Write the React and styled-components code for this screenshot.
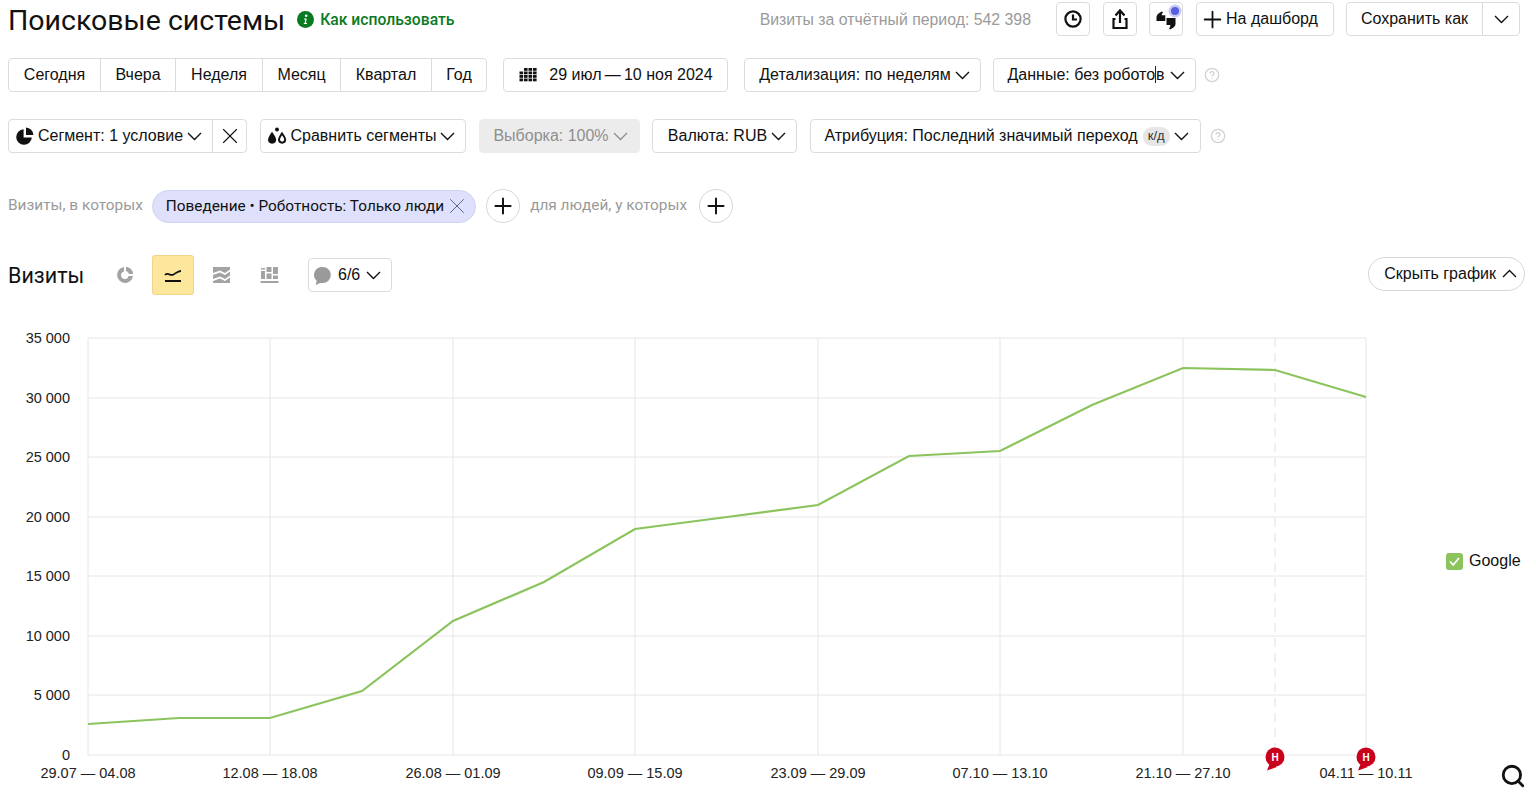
import React from "react";
import styled, { createGlobalStyle } from "styled-components";
import { X, Plus, Search, CircleHelp } from "lucide-react";

const GlobalStyle = createGlobalStyle`
  html, body {
    margin: 0;
    padding: 0;
    background: #fff;
    color: #111;
    font-family: "Liberation Sans", Arial, sans-serif;
    overflow: hidden;
  }
  * { box-sizing: border-box; }
`;

const Page = styled.div`
  width: 1536px;
  height: 798px;
  padding: 2px 16px 0 8px;
  overflow: hidden;
`;

const TopRow = styled.div`
  height: 34px;
  display: flex;
  align-items: center;
  justify-content: space-between;
`;

const TitleGroup = styled.div`
  display: flex;
  align-items: center;
  gap: 12px;
`;

const Title = styled.h1`
  margin: 4px 0 0;
  font-family: Roboto, "Liberation Sans", sans-serif;
  font-size: 28.5px;
  font-weight: 400;
  line-height: 34px;
  white-space: nowrap;
`;

const HowTo = styled.a`
  display: flex;
  align-items: center;
  gap: 6px;
  color: #0a7a21;
  font-family: Roboto, sans-serif;
  font-size: 15.7px;
  font-weight: 500;
`;

const TopActions = styled.div`
  display: flex;
  align-items: center;
`;

const Period = styled.span`
  margin: 1px 25px 0 0;
  color: #9a9a9a;
  font-size: 15.85px;
  white-space: nowrap;
`;

const Button = styled.button`
  height: ${(p) => p.$h || 34}px;
  width: ${(p) => (p.$w ? `${p.$w}px` : "auto")};
  margin-left: ${(p) => p.$ml || 0}px;
  padding: ${(p) => (p.$pad !== undefined ? p.$pad : "0 15px")};
  display: flex;
  align-items: center;
  justify-content: ${(p) => p.$justify || "center"};
  gap: ${(p) => p.$gap || 0}px;
  flex: none;
  position: relative;
  background: ${(p) => (p.$disabled ? "#ececec" : "#fff")};
  color: ${(p) => (p.$disabled ? "#8f8f8f" : "#111")};
  border: 1px solid ${(p) => (p.$disabled ? "#ececec" : "#dcdcdc")};
  border-radius: 4px;
  font-family: "Liberation Sans", Arial, sans-serif;
  font-size: 16px;
  white-space: nowrap;
`;

const Joined = styled.div`
  display: flex;
  flex: none;
  margin-left: ${(p) => p.$ml || 0}px;

  & > button { border-radius: 0; margin-left: -1px; }
  & > button:first-child { border-radius: 4px 0 0 4px; margin-left: 0; }
  & > button:last-child { border-radius: 0 4px 4px 0; }
`;

const Dot = styled.span`
  position: absolute;
  top: 4px;
  right: 3px;
  width: 8px;
  height: 8px;
  border-radius: 50%;
  background: #5a5fe0;
  box-shadow: 0 0 0 2.5px #c9caf7;
`;

const ControlRow = styled.div`
  display: flex;
  align-items: center;
  height: 34px;
  margin-top: ${(p) => p.$mt}px;
`;

const Help = styled(CircleHelp)`
  flex: none;
  width: 16px;
  height: 16px;
  margin-left: ${(p) => p.$ml || 8}px;
  color: #d2d2d2;
`;

const Caret = styled.span`
  display: inline-block;
  width: 0;
  height: 17px;
  margin-bottom: -3px;
  border-left: 1px solid #222;
`;

const Hotkey = styled.span`
  margin: 0 4px 0 5px;
  padding: 1px 5px 3px;
  background: #e6e6e6;
  border-radius: 9px;
  font-size: 13px;
  color: #333;
`;

const FilterRow = styled.div`
  display: flex;
  align-items: center;
  height: 34px;
  margin-top: 36px;
`;

const FilterLabel = styled.span`
  color: #9a9a9a;
  font-family: Roboto, sans-serif;
  font-size: 15.4px;
  margin-bottom: 3px;
  white-space: nowrap;
`;

const Chip = styled.div`
  height: 33px;
  margin-left: 9px;
  padding: 0 5px 0 13px;
  display: flex;
  align-items: center;
  background: #dfe0fb;
  border: 1px solid #cfd1f3;
  border-radius: 17px;
  font-family: Roboto, sans-serif;
  font-size: 15.35px;
  white-space: nowrap;
`;

const RoundAdd = styled.button`
  width: 34px;
  height: 34px;
  flex: none;
  margin: 0 10px 0 ${(p) => p.$ml || 10}px;
  padding: 0;
  display: flex;
  align-items: center;
  justify-content: center;
  background: #fff;
  color: #111;
  border: 1px solid #d6d6d6;
  border-radius: 50%;
`;

const ChartHeader = styled.div`
  display: flex;
  align-items: center;
  height: 40px;
  margin-top: 32px;
`;

const ChartTitle = styled.h2`
  margin: 1px 0 0;
  width: 96px;
  font-family: Roboto, sans-serif;
  font-size: 21.5px;
  font-weight: 400;
`;

const ChartType = styled.button`
  width: 42px;
  height: 40px;
  margin: 0 ${(p) => p.$mr || 6}px 0 0;
  padding: 0;
  display: flex;
  align-items: center;
  justify-content: center;
  background: ${(p) => (p.$active ? "#fde79c" : "transparent")};
  border: 1px solid ${(p) => (p.$active ? "#ecd68b" : "transparent")};
  border-radius: 3px;
`;

const HideChart = styled.button`
  height: 34px;
  margin: 0 -5px 3px auto;
  padding: 0 7px 0 15px;
  display: flex;
  align-items: center;
  gap: 6px;
  background: #fff;
  color: #111;
  border: 1px solid #d6d6d6;
  border-radius: 17px;
  font-family: "Liberation Sans", Arial, sans-serif;
  font-size: 16px;
  white-space: nowrap;
`;

const ChartArea = styled.div`
  display: flex;
  height: 483px;
  margin: 25px -16px 0 -8px;
`;

const Plot = styled.svg`
  width: 1430px;
  height: 483px;
  flex: none;
  font-family: "Liberation Sans", Arial, sans-serif;
`;

const Side = styled.div`
  flex: 1;
  display: flex;
  flex-direction: column;
  align-items: flex-start;
  padding: 232px 0 0 16px;
`;

const Legend = styled.label`
  display: flex;
  align-items: center;
  gap: 6px;
  font-size: 16px;
`;

const LegendBox = styled.span`
  width: 17px;
  height: 17px;
  display: flex;
  align-items: center;
  justify-content: center;
  background: #8bc45d;
  border-radius: 3px;
`;

const Zoom = styled(Search)`
  width: 26px;
  height: 26px;
  margin: 193px 0 0 54px;
  color: #111;
`;

const Chev = ({ color = "#111", up }) => (
  <svg width="15" height="9" viewBox="0 0 15 9" fill="none" stroke={color} strokeWidth="1.4">
    <path d={up ? "M1 8L7.5 1.5L14 8" : "M1 1L7.5 7.5L14 1"} />
  </svg>
);

const ClockIcon = () => (
  <svg width="20" height="20" viewBox="0 0 20 20" fill="none" stroke="#111" strokeWidth="2.2">
    <circle cx="10" cy="10" r="7.6" />
    <path d="M10 5.5V10.5H14" />
  </svg>
);

const ShareIcon = () => (
  <svg width="20" height="22" viewBox="0 0 20 22" fill="none" stroke="#111" strokeWidth="2.2">
    <path d="M10 15V3.5" />
    <path d="M5.5 7.5L10 2.5L14.5 7.5" />
    <path d="M5.5 11H3.5V20H16.5V11H14.5" />
  </svg>
);

const QuotesIcon = () => (
  <svg width="20" height="21" viewBox="0 0 20 21" fill="#111">
    <path d="M0.5 8C0.5 6 2.5 4 6 2.5L7 3.5C6 4.5 5.7 5.5 5.7 6.2H9.3V12H0.5Z" />
    <path d="M10.5 9H19.5V15C19.5 17 17.5 19 14 20.5L13 19.5C14 18.5 14.3 17.5 14.3 16H10.5Z" />
  </svg>
);

const GridIcon = () => (
  <svg width="20" height="16" viewBox="0 0 20 16" fill="#111">
    {[0, 1, 2, 3].map((r) =>
      [0, 1, 2, 3].map((c) =>
        r === 0 && c === 0 ? null : <rect key={`${r}-${c}`} x={1.5 + c * 4.5} y={1 + r * 3.5} width="3.6" height="2.8" />
      )
    )}
  </svg>
);

const PieIcon = ({ color = "#111", size = 18 }) => (
  <svg width={size} height={size} viewBox="0 0 18 18" fill={color}>
    <path d="M7.6 2.2A7.8 7.8 0 1 0 15.8 10.4H7.6Z" />
    <path d="M10 0.6A7.8 7.8 0 0 1 17.4 8H10Z" />
  </svg>
);

const DropsIcon = () => (
  <svg width="20" height="18" viewBox="0 0 20 18" fill="none" stroke="#111" strokeWidth="2">
    <path d="M5 6.5C3.4 9 2 10.5 2 12.6A3.1 3.1 0 0 0 8.2 12.6C8.2 10.5 6.6 9 5 6.5Z" fill="#111" />
    <path d="M15 6.5C13.4 9 12 10.5 12 12.6A3.1 3.1 0 0 0 18.2 12.6C18.2 10.5 16.6 9 15 6.5Z" />
    <circle cx="10" cy="2.4" r="2" fill="#111" stroke="none" />
  </svg>
);

const InfoIcon = () => (
  <svg width="17" height="17" viewBox="0 0 17 17">
    <circle cx="8.5" cy="8.5" r="8.5" fill="#0a7a21" />
    <circle cx="9.2" cy="4.7" r="1.3" fill="#fff" />
    <path d="M7 7.4H9.7L8.9 12H10V13H6.8V12H7.7L8.2 8.4H7Z" fill="#fff" />
  </svg>
);

const DonutType = () => (
  <svg width="18" height="18" viewBox="0 0 18 18" fill="#a3a3a3">
    <path d="M8 1A8 8 0 1 0 17 10H12.6A3.8 3.8 0 1 1 8 5.4Z" />
    <path d="M10 0.8A8 8 0 0 1 17.2 8H13A4 4 0 0 0 10 5Z" />
  </svg>
);

const LineType = () => (
  <svg width="20" height="16" viewBox="0 0 20 16" fill="none" stroke="#111" strokeWidth="1.8">
    <path d="M2 8C5 4.5 7 9.5 10.5 7.5C13 6 15 4 18 4" />
    <path d="M2 14H18" strokeWidth="2" />
  </svg>
);

const AreaType = () => (
  <svg width="19" height="18" viewBox="0 0 19 18" fill="#a3a3a3">
    <path d="M1 1H18V3.5L13 7L8 4.5L1 7Z" />
    <path d="M1 9L8 6.5L13 9L18 5.5V9.5L13 13L8 10.5L1 13Z" />
    <path d="M1 15L8 12.5L13 15L18 11.5V17H1Z" />
  </svg>
);

const BarsType = () => (
  <svg width="19" height="18" viewBox="0 0 19 18" fill="#a3a3a3">
    <path d="M1 2H5V3.5H1ZM1 5H5V13H1ZM6.5 1H11.5V6H6.5ZM6.5 7.5H11.5V13H6.5ZM13 1H18V8H13ZM13 9.5H18V13H13Z" />
    <rect x="0.5" y="15" width="18" height="2" />
  </svg>
);

const BubbleIcon = () => (
  <svg width="19" height="19" viewBox="0 0 19 19" fill="#9a9a9a">
    <path d="M9.8 1A8 8 0 0 1 9.8 17C8 17 6.4 16.6 4.2 18.4C3.2 18.9 2.5 18.6 3 17.6C3.5 16.6 3.6 15.6 3.4 14.6A8 8 0 0 1 9.8 1Z" />
  </svg>
);

const yTicks = [
  ["35 000", 18],
  ["30 000", 78],
  ["25 000", 137],
  ["20 000", 197],
  ["15 000", 256],
  ["10 000", 316],
  ["5 000", 375],
  ["0", 435],
];

const xTicks = [
  ["29.07 — 04.08", 88],
  ["12.08 — 18.08", 270],
  ["26.08 — 01.09", 453],
  ["09.09 — 15.09", 635],
  ["23.09 — 29.09", 818],
  ["07.10 — 13.10", 1000],
  ["21.10 — 27.10", 1183],
  ["04.11 — 10.11", 1366],
];

// y is counted from the top of the chart area (page y - 320)
const visits = [
  [88, 404], [179, 398], [270, 398], [362, 371], [453, 301],
  [544, 262], [635, 209], [727, 197], [818, 185], [909, 136],
  [1000, 131], [1092, 85], [1183, 48], [1275, 50], [1366, 77],
];

const Note = ({ x }) => (
  <g transform={`translate(${x} 437)`}>
    <path d="M-5 6L-8 13.5L2 10Z" fill="#c9001c" />
    <circle r="9.5" fill="#c9001c" />
    <text y="3.8" textAnchor="middle" fontSize="10" fontWeight="700" fill="#fff">Н</text>
  </g>
);

const VisitsChart = () => (
  <Plot viewBox="0 0 1430 483">
    {yTicks.map(([label, y]) => (
      <g key={label}>
        <line x1="88" x2="1366" y1={y} y2={y} stroke="#e6e6e6" />
        <text x="70" y={y + 5} textAnchor="end" fontSize="14.5" fill="#222">{label}</text>
      </g>
    ))}
    {xTicks.map(([label, x]) => (
      <g key={label}>
        <line x1={x} x2={x} y1="18" y2="435" stroke="#e6e6e6" />
        <text x={x} y="458" textAnchor="middle" fontSize="14.5" fill="#222">{label}</text>
      </g>
    ))}
    <line x1="1275" x2="1275" y1="18" y2="435" stroke="#e0e0e0" strokeDasharray="9 6" />
    <polyline points={visits.map((p) => p.join(",")).join(" ")} fill="none" stroke="#8bc45d" strokeWidth="2.2" />
    <Note x={1275} />
    <Note x={1366} />
  </Plot>
);

export default function App() {
  return (
    <>
      <GlobalStyle />
      <Page>
        <TopRow>
          <TitleGroup>
            <Title>Поисковые системы</Title>
            <HowTo>
              <InfoIcon />
              Как использовать
            </HowTo>
          </TitleGroup>
          <TopActions>
            <Period>Визиты за отчётный период: 542 398</Period>
            <Button $w={34} $pad="0"><ClockIcon /></Button>
            <Button $w={34} $pad="0" $ml={13}><ShareIcon /></Button>
            <Button $w={34} $pad="0" $ml={12}>
              <QuotesIcon />
              <Dot />
            </Button>
            <Button $w={138} $pad="0 0 0 2px" $ml={13} $justify="flex-start">
              <Plus size={27} strokeWidth={1.6} />
              На дашборд
            </Button>
            <Joined $ml={12}>
              <Button $w={137}>Сохранить как</Button>
              <Button $w={38} $pad="0"><Chev /></Button>
            </Joined>
          </TopActions>
        </TopRow>

        <ControlRow $mt={22}>
          <Joined>
            <Button $w={93}>Сегодня</Button>
            <Button $w={76}>Вчера</Button>
            <Button $w={88}>Неделя</Button>
            <Button $w={79}>Месяц</Button>
            <Button $w={92}>Квартал</Button>
            <Button $w={56}>Год</Button>
          </Joined>
          <Button $w={225} $ml={16} $gap={11} $pad="0">
            <GridIcon />
            29 июл{"\u2009"}—{"\u2009"}10 ноя 2024
          </Button>
          <Button $w={237} $ml={16} $gap={4} $pad="0 0 0 4px">Детализация: по неделям <Chev /></Button>
          <Button $w={203} $ml={12} $gap={5} $pad="0 0 0 3px">
            <span>Данные: без робото<Caret />в</span> <Chev />
          </Button>
          <Help />
        </ControlRow>

        <ControlRow $mt={27}>
          <Joined>
            <Button $w={205} $gap={4} $pad="0 3px 0 0">
              <PieIcon />
              Сегмент: 1 условие <Chev />
            </Button>
            <Button $w={35} $pad="0"><X size={26} strokeWidth={1} /></Button>
          </Joined>
          <Button $w={206} $ml={13} $gap={3} $pad="0 4px 0 0">
            <DropsIcon />
            Сравнить сегменты <Chev />
          </Button>
          <Button $w={161} $ml={13} $gap={4} $pad="0 0 0 2px" $disabled>
            Выборка: 100% <Chev color="#8f8f8f" />
          </Button>
          <Button $w={145} $ml={12} $gap={4} $pad="0 0 0 5px">Валюта: RUB <Chev /></Button>
          <Button $w={391} $ml={13} $pad="0 0 0 2px">
            Атрибуция: Последний значимый переход
            <Hotkey>к/д</Hotkey>
            <Chev />
          </Button>
          <Help $ml={9} />
        </ControlRow>

        <FilterRow>
          <FilterLabel>Визиты, в которых</FilterLabel>
          <Chip>
            Поведение • Роботность: Только люди
            <X size={26} strokeWidth={0.9} color="#5c5f8c" />
          </Chip>
          <RoundAdd><Plus size={26} strokeWidth={1.8} /></RoundAdd>
          <FilterLabel>для людей, у которых</FilterLabel>
          <RoundAdd $ml={12}><Plus size={26} strokeWidth={1.8} /></RoundAdd>
        </FilterRow>

        <ChartHeader>
          <ChartTitle>Визиты</ChartTitle>
          <ChartType><DonutType /></ChartType>
          <ChartType $active><LineType /></ChartType>
          <ChartType><AreaType /></ChartType>
          <ChartType $mr={18}><BarsType /></ChartType>
          <Button $w={84} $gap={6} $pad="0 0 0 4px" $justify="flex-start"><BubbleIcon /> 6/6 <Chev /></Button>
          <HideChart>
            Скрыть график
            <Chev up />
          </HideChart>
        </ChartHeader>

        <ChartArea>
          <VisitsChart />
          <Side>
            <Legend>
              <LegendBox>
                <svg width="13" height="13" viewBox="0 0 13 13" fill="none" stroke="#fff" strokeWidth="1.8">
                  <path d="M2 6.5L5.2 10L11 3" />
                </svg>
              </LegendBox>
              Google
            </Legend>
            <Zoom strokeWidth={2.6} />
          </Side>
        </ChartArea>
      </Page>
    </>
  );
}
